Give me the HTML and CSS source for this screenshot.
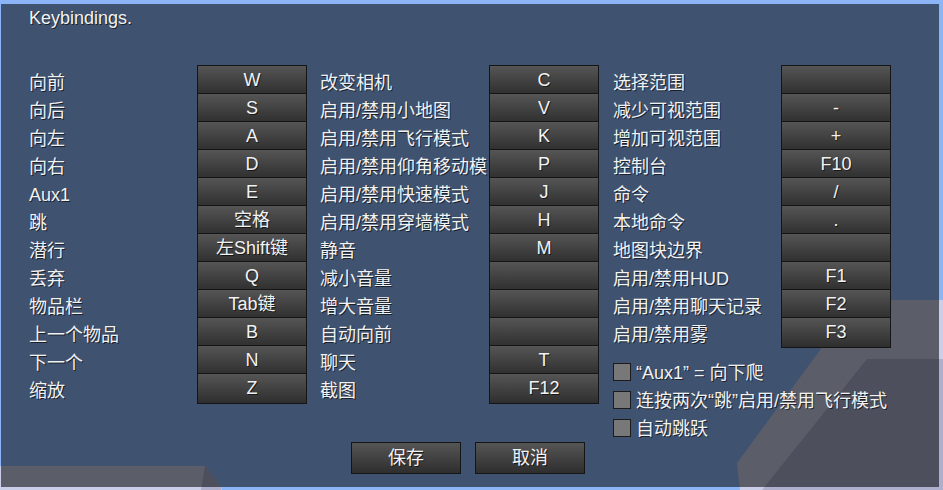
FILE: index.html
```html
<!DOCTYPE html>
<html lang="zh">
<head>
<meta charset="utf-8">
<title>Keybindings</title>
<link rel="stylesheet" href="styles.css">
</head>
<body>
<svg class="backdrop" width="943" height="490" viewBox="0 0 943 490" aria-hidden="true">
  <polygon class="s-light" points="857,300 943,300 943,490 740,490 737,463"/>
  <polygon class="s-dark" points="867,359 943,359 943,490 762,490"/>
  <polygon class="s-light" points="0,466 205,466 222,488 222,490 0,490"/>
  <polygon class="s-dark" points="205,466 222,488 221,490 201,490"/>
</svg>
<main class="panel">
  <h1 class="title">Keybindings.</h1>
  <div class="columns">
    <section class="col col-1">
      <div class="keys">
        <span class="label">向前</span><span class="key">W</span>
        <span class="label">向后</span><span class="key">S</span>
        <span class="label">向左</span><span class="key">A</span>
        <span class="label">向右</span><span class="key">D</span>
        <span class="label">Aux1</span><span class="key">E</span>
        <span class="label">跳</span><span class="key">空格</span>
        <span class="label">潜行</span><span class="key">左Shift键</span>
        <span class="label">丢弃</span><span class="key">Q</span>
        <span class="label">物品栏</span><span class="key">Tab键</span>
        <span class="label">上一个物品</span><span class="key">B</span>
        <span class="label">下一个</span><span class="key">N</span>
        <span class="label">缩放</span><span class="key">Z</span>
      </div>
    </section>
    <section class="col col-2">
      <div class="keys">
        <span class="label">改变相机</span><span class="key">C</span>
        <span class="label">启用/禁用小地图</span><span class="key">V</span>
        <span class="label">启用/禁用飞行模式</span><span class="key">K</span>
        <span class="label">启用/禁用仰角移动模式</span><span class="key">P</span>
        <span class="label">启用/禁用快速模式</span><span class="key">J</span>
        <span class="label">启用/禁用穿墙模式</span><span class="key">H</span>
        <span class="label">静音</span><span class="key">M</span>
        <span class="label">减小音量</span><span class="key"></span>
        <span class="label">增大音量</span><span class="key"></span>
        <span class="label">自动向前</span><span class="key"></span>
        <span class="label">聊天</span><span class="key">T</span>
        <span class="label">截图</span><span class="key">F12</span>
      </div>
    </section>
    <section class="col col-3">
      <div class="keys">
        <span class="label">选择范围</span><span class="key"></span>
        <span class="label">减少可视范围</span><span class="key">-</span>
        <span class="label">增加可视范围</span><span class="key">+</span>
        <span class="label">控制台</span><span class="key">F10</span>
        <span class="label">命令</span><span class="key">/</span>
        <span class="label">本地命令</span><span class="key">.</span>
        <span class="label">地图块边界</span><span class="key"></span>
        <span class="label">启用/禁用HUD</span><span class="key">F1</span>
        <span class="label">启用/禁用聊天记录</span><span class="key">F2</span>
        <span class="label">启用/禁用雾</span><span class="key">F3</span>
      </div>
      <ul class="opts">
        <li class="opt"><span class="box"></span><span>“Aux1” = 向下爬</span></li>
        <li class="opt"><span class="box"></span><span>连按两次“跳”启用/禁用飞行模式</span></li>
        <li class="opt"><span class="box"></span><span>自动跳跃</span></li>
      </ul>
    </section>
  </div>
  <div class="actions">
    <button class="btn" type="button">保存</button>
    <button class="btn" type="button">取消</button>
  </div>
</main>
</body>
</html>
```

FILE: styles.css
```css
* { box-sizing: border-box; }

html, body { margin: 0; }

body {
  position: relative;
  width: 943px;
  height: 490px;
  overflow: hidden;
  padding: 4px 4px 3px 1px;
  background: #8cb5f8;
  font-family: "Liberation Sans", "Noto Sans CJK SC", sans-serif;
  font-size: 18px;
  color: #f2f2f2;
  text-shadow: 1px 1px 0 rgba(0, 0, 0, 0.6);
}

.backdrop {
  position: absolute;
  left: 0;
  top: 0;
}

.s-light { fill: #cbcee9; }
.s-dark { fill: #adafcc; }

.panel {
  position: relative;
  width: 938px;
  height: 483px;
  padding: 3px 0 0 28px;
  background: rgba(0, 0, 0, 0.55);
}

.title {
  margin: 0;
  font-size: 18px;
  font-weight: normal;
  line-height: 22px;
}

.columns {
  display: flex;
  align-items: flex-start;
  gap: 13px;
  margin-top: 36px;
}

.col-3 { margin-left: 1px; }

.keys {
  display: grid;
  grid-template-columns: 168px 110px;
  grid-auto-rows: 28px;
}

.col-2 .keys { grid-template-columns: 169px 110px; }

.label {
  padding-top: 4px;
  line-height: 28px;
  white-space: nowrap;
  overflow: hidden;
}

.col-2 .label { width: 168px; }

.key,
.btn {
  display: block;
  position: relative;
  border: 1px solid #151515;
  background: linear-gradient(#555, #2e2e2e);
  color: #f2f2f2;
  text-align: center;
  white-space: nowrap;
}

.key {
  height: 31px;
  line-height: 29px;
}

.opts {
  list-style: none;
  margin: 12px 0 0;
  padding: 0;
}

.opt {
  display: flex;
  align-items: center;
  gap: 5px;
  height: 28px;
  white-space: nowrap;
}

.box {
  flex: none;
  width: 18px;
  height: 18px;
  margin-top: 1px;
  background: #787878;
  border: 1px solid #1c1c1c;
}

.actions {
  display: flex;
  gap: 14px;
  margin-top: 1px;
  margin-left: 322px;
}

.btn {
  width: 110px;
  height: 32px;
  padding: 0;
  font: inherit;
  line-height: 30px;
  text-shadow: inherit;
}
```
